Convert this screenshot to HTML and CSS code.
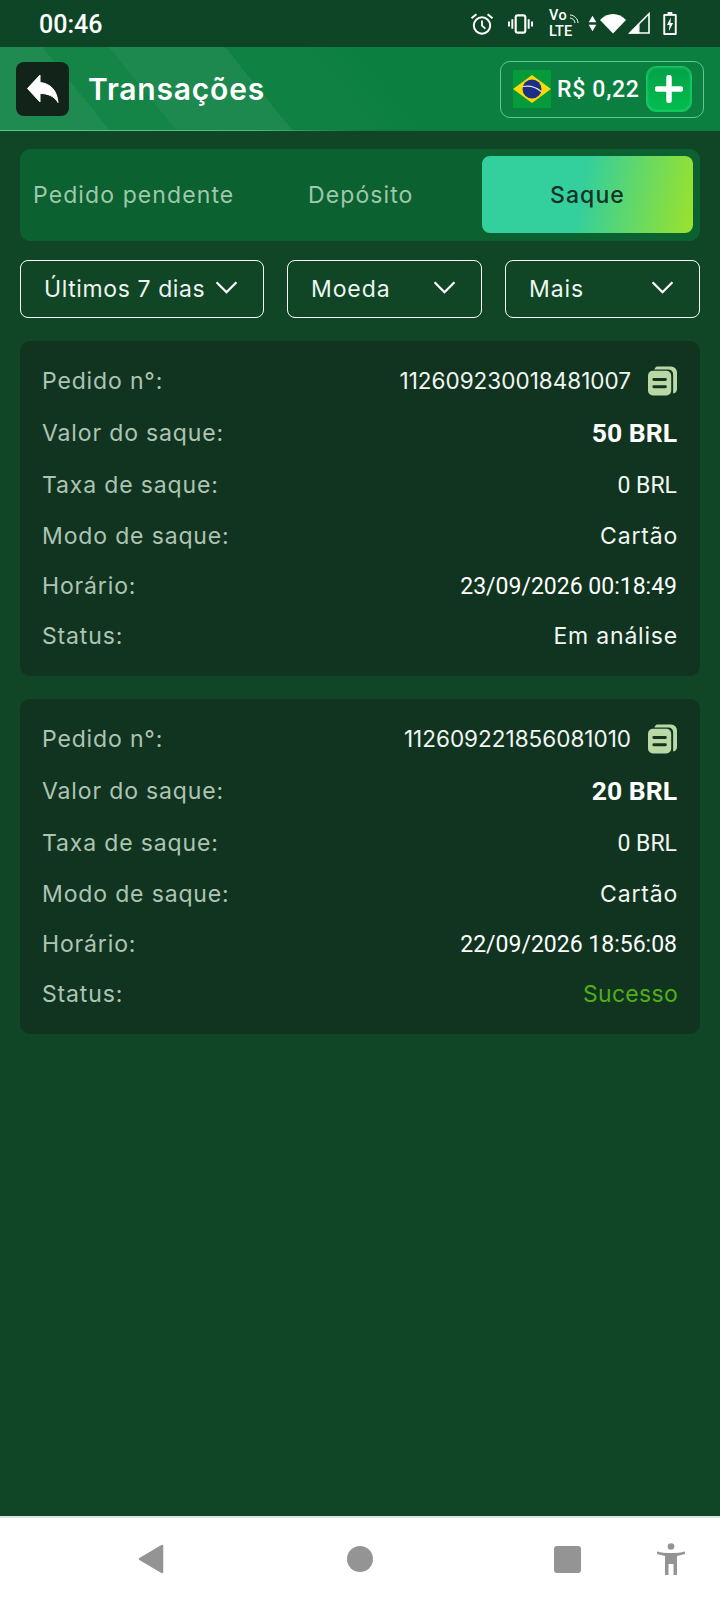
FILE: index.html
```html
<!DOCTYPE html>
<html lang="pt-BR">
  <head>
    <meta charset="UTF-8" />
    <title>Transações</title>
    <link rel="stylesheet" href="styles.css">
  </head>
  <body>
    <div class="status-bar">
      <span class="clock">00:46</span>
      <div class="status-icons">
        <svg class="ic-alarm" viewBox="0 0 24 24"><circle cx="12" cy="13.500" r="8.200" fill="none" stroke="#fff" stroke-width="2"/><path d="M12 8.500v5.200l3.400 3" fill="none" stroke="#fff" stroke-width="1.800"/><path d="M1.500 6.200 6.400 2.200M22.500 6.200 17.600 2.200" stroke="#fff" stroke-width="2" fill="none"/></svg>
        <svg class="ic-vibrate" viewBox="0 0 26 24"><rect x="8" y="3" width="10" height="18" rx="2" fill="none" stroke="#fff" stroke-width="2.200"/><path d="M4.500 7v10M21.500 7v10M1 9.500v5M25 9.500v5" stroke="#fff" stroke-width="2"/></svg>
        <div class="volte">
          <span class="vo">Vo</span>
          <span>LTE</span>
          <svg viewBox="0 0 10 10"><path d="M1 1c4 0 8 4 8 8M1 4c2.500 0 5 2.500 5 5" fill="none" stroke="#fff" stroke-width="1"/></svg>
        </div>
        <svg class="ic-arrows" viewBox="0 0 10 20"><path d="M5 1 9.500 8.500H.5zM5 19 .5 11.500h9z" fill="#fff"/></svg>
        <svg class="ic-wifi" viewBox="0 0 26 20"><path d="M0 6.500C3.500 2.500 8 .5 13 .5s9.500 2 13 6L13 20z" fill="#fff"/></svg>
        <svg class="ic-signal" viewBox="0 0 22 22"><path d="M21 1.800V21H1.800z" fill="none" stroke="#fff" stroke-width="1.600"/><path d="M1 21.500 11.500 11V21.500z" fill="#fff"/></svg>
        <svg class="ic-battery" viewBox="0 0 14 24"><path d="M4.500 0h5v2H13a1 1 0 0 1 1 1v20a1 1 0 0 1-1 1H1a1 1 0 0 1-1-1V3a1 1 0 0 1 1-1h3.500z" fill="#fff"/><rect x="2" y="4" width="10" height="18" fill="#0e4526"/><path d="M8 5.500 3.800 13.500H6.500L5.800 20 10.200 11.500H7.400z" fill="#fff"/></svg>
      </div>
    </div>

    <header class="top-bar">
      <button class="back-btn">
        <svg viewBox="0 0 32 30"><path d="M13 1v7.500C24 9.500 30 17 31 28.500 27 22 21 19.500 13 19.500V28L0.500 14.500z" fill="#fff" stroke="#fff" stroke-width="1" stroke-linejoin="round"/></svg>
      </button>
      <h1>Transações</h1>
      <div class="balance">
        <svg class="flag" viewBox="0 0 38 38">
          <rect width="38" height="38" fill="#069b3a"/>
          <path d="M19 5 38 19 19 33 0 19z" fill="#fbd80a"/>
          <circle cx="19" cy="19" r="9.500" fill="#1a2f85"/>
          <path d="M10 16.500c6-1 13 .5 18 5" fill="none" stroke="#dfe7e6" stroke-width="1.200"/>
        </svg>
        <span class="amount">R$ 0,22</span>
        <button class="add-btn">
          <svg viewBox="0 0 28 28"><path d="M14 2.500v23M2.500 14h23" stroke="#fff" stroke-width="5.500" stroke-linecap="round"/></svg>
        </button>
      </div>
    </header>

    <main class="content">
      <div class="tabs">
        <div class="tab tab-pending">Pedido pendente</div>
        <div class="tab tab-deposit">Depósito</div>
        <div class="tab tab-active">Saque</div>
      </div>

      <div class="filters">
        <div class="filter filter-date"><span>Últimos 7 dias</span><svg viewBox="0 0 22 14"><path d="M1.500 2 11 11.500 20.500 2" fill="none" stroke="#fff" stroke-width="2.200"/></svg></div>
        <div class="filter filter-coin"><span>Moeda</span><svg viewBox="0 0 22 14"><path d="M1.500 2 11 11.500 20.500 2" fill="none" stroke="#fff" stroke-width="2.200"/></svg></div>
        <div class="filter filter-more"><span>Mais</span><svg viewBox="0 0 22 14"><path d="M1.500 2 11 11.500 20.500 2" fill="none" stroke="#fff" stroke-width="2.200"/></svg></div>
      </div>

      <div class="order-list">
        <section class="order-card">
          <div class="row row-id">
            <span class="label">Pedido n°:</span>
            <span class="value order-id">112609230018481007
              <svg class="copy" viewBox="0 0 30 30"><path d="M9 0h15a6 6 0 0 1 6 6v17a5 5 0 0 1-4 4.900V8a5 5 0 0 0-5-5H6.500A6 6 0 0 1 9 0z" fill="#b9d8a5"/><rect x="0" y="4.500" width="24" height="25.500" rx="5" fill="#b9d8a5"/><path d="M6 13.500h12M6 21h12" stroke="#12341f" stroke-width="3" stroke-linecap="round"/></svg>
            </span>
          </div>
          <div class="row row-amount">
            <span class="label">Valor do saque:</span>
            <span class="value big">50 BRL</span>
          </div>
          <div class="row row-fee">
            <span class="label">Taxa de saque:</span>
            <span class="value num">0 BRL</span>
          </div>
          <div class="row">
            <span class="label">Modo de saque:</span>
            <span class="value">Cartão</span>
          </div>
          <div class="row">
            <span class="label">Horário:</span>
            <span class="value date">23/09/2026 00:18:49</span>
          </div>
          <div class="row">
            <span class="label">Status:</span>
            <span class="value">Em análise</span>
          </div>
        </section>

        <section class="order-card">
          <div class="row row-id">
            <span class="label">Pedido n°:</span>
            <span class="value order-id">112609221856081010
              <svg class="copy" viewBox="0 0 30 30"><path d="M9 0h15a6 6 0 0 1 6 6v17a5 5 0 0 1-4 4.900V8a5 5 0 0 0-5-5H6.500A6 6 0 0 1 9 0z" fill="#b9d8a5"/><rect x="0" y="4.500" width="24" height="25.500" rx="5" fill="#b9d8a5"/><path d="M6 13.500h12M6 21h12" stroke="#12341f" stroke-width="3" stroke-linecap="round"/></svg>
            </span>
          </div>
          <div class="row row-amount">
            <span class="label">Valor do saque:</span>
            <span class="value big">20 BRL</span>
          </div>
          <div class="row row-fee">
            <span class="label">Taxa de saque:</span>
            <span class="value num">0 BRL</span>
          </div>
          <div class="row">
            <span class="label">Modo de saque:</span>
            <span class="value">Cartão</span>
          </div>
          <div class="row">
            <span class="label">Horário:</span>
            <span class="value date">22/09/2026 18:56:08</span>
          </div>
          <div class="row">
            <span class="label">Status:</span>
            <span class="value success">Sucesso</span>
          </div>
        </section>
      </div>
    </main>

    <nav class="nav-bar">
      <svg class="nav-back" viewBox="0 0 26 30"><path d="M24 2 2 15l22 13z" fill="#949494" stroke="#949494" stroke-width="2.500" stroke-linejoin="round"/></svg>
      <div class="nav-home"></div>
      <div class="nav-recent"></div>
      <svg class="nav-access" viewBox="0 0 28 32"><circle cx="14" cy="3.500" r="3.300" fill="#949494"/><path d="M0 8.500c4 1 9 1.500 14 1.500s10-.5 14-1.500l.5 2.500-8.500 2V32h-3.500v-11h-5v11H8V13L-.5 11z" fill="#949494"/></svg>
    </nav>
  </body>
</html>
```

FILE: styles.css
```css
* {
  box-sizing: border-box;
}

body {
  margin: 0;
  width: 720px;
  height: 1600px;
  display: flex;
  flex-direction: column;
  background: #104526;
  color: #fff;
  font-family: "Inter", "Open Sans", sans-serif;
  overflow: hidden;
}

/* status bar */
.status-bar {
  height: 47px;
  flex-shrink: 0;
  display: flex;
  align-items: center;
  justify-content: space-between;
  padding: 0 40px 0 39px;
  background: #0e4526;
}

.clock {
  margin-top: 2px;
  font-family: "Roboto", sans-serif;
  font-weight: 500;
  font-size: 25px;
}

.status-icons {
  display: flex;
  align-items: center;
  width: 210px;
}

.status-icons svg {
  display: block;
  flex-shrink: 0;
}

.ic-alarm {
  width: 24px;
  height: 24px;
}

.ic-vibrate {
  width: 25px;
  height: 24px;
  margin-left: 14px;
}

.volte {
  position: relative;
  width: 27px;
  height: 32px;
  margin-left: 16px;
  display: flex;
  flex-direction: column;
  font-family: "Roboto", sans-serif;
  font-weight: 500;
  font-size: 14.500px;
  line-height: 16px;
}

.vo {
  letter-spacing: 0.5px;
}

.volte svg {
  position: absolute;
  top: 6px;
  right: -3px;
  width: 10px;
  height: 10px;
}

.ic-arrows {
  width: 9px;
  height: 17px;
  margin-left: 12px;
}

.ic-wifi {
  width: 26px;
  height: 21px;
  margin-left: 3px;
}

.ic-signal {
  width: 22px;
  height: 22px;
  margin-left: 2px;
  margin-top: -2px;
}

.ic-battery {
  width: 14px;
  height: 23px;
  margin-left: 13px;
}

/* header */
.top-bar {
  height: 84px;
  flex-shrink: 0;
  display: flex;
  align-items: center;
  padding: 1px 16px 0;
  border-bottom: 1px solid transparent;
  border-image: linear-gradient(to right, #56cf86, #47be78 35%, #0a7d3e 50%) 1;
  background:
    linear-gradient(51deg, rgba(255, 255, 255, 0.09) 0 85px, rgba(255, 255, 255, 0.04) 85px 137px, rgba(255, 255, 255, 0.08) 137px 227px, rgba(255, 255, 255, 0.02) 227px 290px, transparent 330px),
    #0a7f3f;
}

.back-btn {
  width: 53px;
  height: 54px;
  padding: 0;
  border: none;
  border-radius: 8px;
  background: #12241a;
  display: flex;
  align-items: center;
  justify-content: center;
}

.back-btn svg {
  width: 32px;
  height: 30px;
}

.top-bar h1 {
  margin: 0 0 0 19px;
  font-size: 30px;
  font-weight: 600;
  letter-spacing: 0.8px;
  flex-grow: 1;
}

.balance {
  width: 204px;
  height: 57px;
  display: flex;
  align-items: center;
  padding: 0 11px 0 12px;
  border: 1px solid #5fc98b;
  border-radius: 10px;
}

.flag {
  width: 38px;
  height: 38px;
  flex-shrink: 0;
}

.amount {
  margin-left: 6px;
  flex-grow: 1;
  font-family: "Roboto", sans-serif;
  font-weight: 500;
  font-size: 23px;
  letter-spacing: 0.7px;
  white-space: nowrap;
}

.add-btn {
  width: 46px;
  height: 46px;
  padding: 0;
  border: 1px solid #12c95c;
  border-radius: 10px;
  background: linear-gradient(to bottom, #03a148, #02bd4e);
  box-shadow: inset 0 0 3px #3bdc82;
  display: flex;
  align-items: center;
  justify-content: center;
}

.add-btn svg {
  width: 28px;
  height: 28px;
}

/* tabs and filters */
.content {
  flex-grow: 1;
  padding: 18px 20px 0;
  display: flex;
  flex-direction: column;
}

.tabs {
  height: 92px;
  display: flex;
  align-items: center;
  padding: 0 7px 0 13px;
  border-radius: 10px;
  background: #0b6130;
}

.tab {
  font-size: 23px;
  letter-spacing: 1.1px;
  color: #9fc8ac;
  white-space: nowrap;
}

.tab-pending {
  width: 275px;
}

.tab-deposit {
  width: 174px;
}

.tab-active {
  width: 211px;
  height: 77px;
  margin-top: -1px;
  display: flex;
  align-items: center;
  justify-content: center;
  border-radius: 8px;
  font-weight: 500;
  color: #15322a;
  background: linear-gradient(100deg, #33cf9c 47%, #9be22b 100%);
}

.filters {
  display: flex;
  justify-content: space-between;
  margin-top: 19px;
}

.filter {
  height: 58px;
  display: flex;
  align-items: center;
  justify-content: space-between;
  padding: 0 25px 0 23px;
  border: 1px solid #fff;
  border-radius: 8px;
  font-size: 23px;
  letter-spacing: 0.9px;
  color: #eef5f0;
}

.filter svg {
  width: 23px;
  height: 15px;
  margin-top: -3px;
}

.filter-date {
  width: 244px;
  letter-spacing: 0.6px;
}

.filter-coin {
  width: 195px;
}

.filter-more {
  width: 195px;
}

/* order cards */
.order-list {
  margin-top: 23px;
  display: flex;
  flex-direction: column;
  gap: 23px;
}

.order-card {
  padding: 14px 23px 15px 22px;
  border-radius: 10px;
  background: #113420;
}

.row {
  height: 50px;
  display: flex;
  align-items: center;
  justify-content: space-between;
}

.row-id {
  height: 51px;
}

.row-fee {
  height: 52px;
}

.row-amount {
  height: 53px;
}

.label {
  font-size: 23px;
  letter-spacing: 0.85px;
  color: #adc4b4;
}

.value {
  margin-right: -1px;
  font-size: 23px;
  letter-spacing: 0.8px;
  color: #f2f6f3;
  white-space: nowrap;
}

.order-id {
  margin-right: 0;
  display: flex;
  align-items: center;
  font-size: 22.500px;
  letter-spacing: 0;
}

.copy {
  width: 29px;
  height: 30px;
  margin-left: 17px;
}

.big {
  margin-right: 0;
  font-family: "Roboto", sans-serif;
  font-weight: 700;
  font-size: 26.500px;
  letter-spacing: 0;
  color: #fff;
}

.num {
  margin-right: 0;
  font-family: "Roboto", sans-serif;
  letter-spacing: 0;
}

.date {
  margin-right: 0;
  font-family: "Roboto", sans-serif;
  font-weight: 400;
  letter-spacing: 0;
  color: #fff;
}

.success {
  letter-spacing: 0.3px;
  color: #4fae1a;
}

/* system nav */
.nav-bar {
  height: 84px;
  flex-shrink: 0;
  position: relative;
  border-top: 2px solid #d8e4de;
  background: #fff;
  display: flex;
  align-items: center;
}

.nav-back {
  width: 26px;
  height: 30px;
  margin-left: 138px;
}

.nav-home {
  width: 26px;
  height: 26px;
  margin-left: 183px;
  border-radius: 50%;
  background: #949494;
}

.nav-recent {
  width: 27px;
  height: 27px;
  margin-left: 181px;
  border-radius: 3px;
  background: #949494;
}

.nav-access {
  width: 28px;
  height: 32px;
  margin-left: 76px;
}
```
